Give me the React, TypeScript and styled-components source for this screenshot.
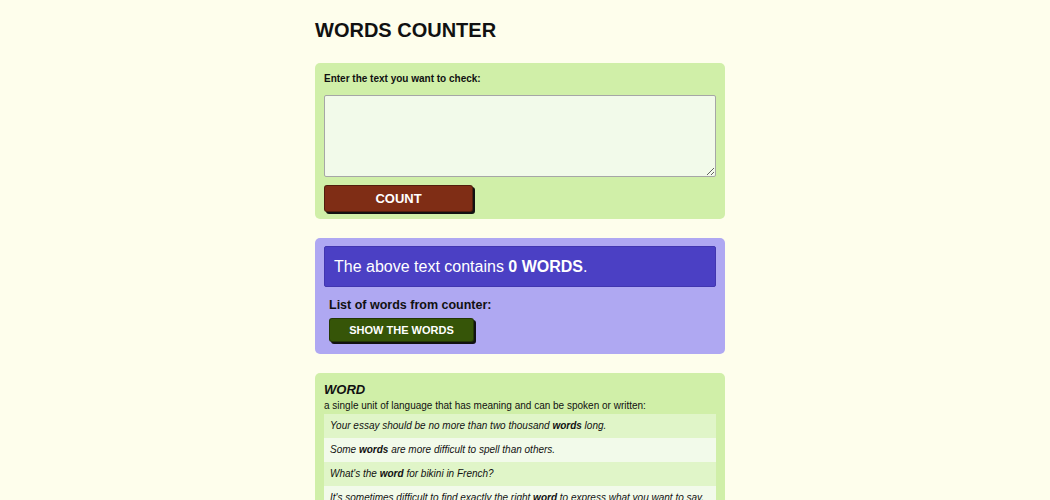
import React from "react";
import styled, { createGlobalStyle } from "styled-components";

const Global = createGlobalStyle`
  html, body { margin: 0; padding: 0; background: #fefeec; }
  body { font-family: "Liberation Sans", Arial, sans-serif; color: #111; }
`;

const Page = styled.div`
  width: 410px;
  margin: 0 0 0 315px;
  padding-top: 19px;
  display: flex;
  flex-direction: column;
`;

const Title = styled.h1`
  margin: 0 0 21px;
  font-size: 20px;
  line-height: 23px;
  font-weight: bold;
  color: #111;
`;

const Box = styled.section<{ $bg: string; $mb?: number }>`
  background: ${(p) => p.$bg};
  border-radius: 5px;
  padding: 8px 9px 7px;
  margin-bottom: ${(p) => p.$mb ?? 19}px;
  display: flex;
  flex-direction: column;
`;

const Label = styled.label`
  font-size: 10px;
  font-weight: bold;
  line-height: 14px;
  margin: 1px 0 9px;
`;

const TextArea = styled.textarea`
  box-sizing: border-box;
  width: 392px;
  height: 82px;
  background: #f2faea;
  border: 1px solid #a6a6a6;
  border-radius: 2px;
  resize: vertical;
  margin: 0 0 8px;
  font-family: inherit;
`;

const Btn = styled.button<{ $bg: string; $w: number; $h: number; $fs: number }>`
  width: ${(p) => p.$w}px;
  height: ${(p) => p.$h}px;
  background: ${(p) => p.$bg};
  color: #fff;
  font-family: "Liberation Sans", Arial, sans-serif;
  font-weight: bold;
  font-size: ${(p) => p.$fs}px;
  border: 1px solid rgba(0, 0, 0, 0.35);
  border-radius: 3px;
  box-shadow: 2px 2px 0 #111;
  padding: 0;
  cursor: pointer;
`;

const ResultBar = styled.div`
  background: #4b40c4;
  border: 1px solid #4136b0;
  border-radius: 2px;
  height: 41px;
  box-sizing: border-box;
  display: flex;
  align-items: center;
  padding-left: 9px;
  color: #fff;
  font-size: 16px;
`;

const SubHead = styled.div`
  font-size: 12.5px;
  font-weight: bold;
  margin: 11px 0 6px 5px;
`;

const BtnWrap = styled.div`
  padding-left: 5px;
  margin-bottom: 5px;
`;

const DefTitle = styled.div`
  font-size: 13px;
  font-weight: bold;
  font-style: italic;
  line-height: 17px;
`;

const DefText = styled.div`
  font-size: 10px;
  line-height: 16px;
`;

const Example = styled.div<{ $alt: boolean }>`
  background: ${(p) => (p.$alt ? "#f2faea" : "#e0f5c8")};
  font-size: 10px;
  font-style: italic;
  line-height: 24px;
  height: 24px;
  padding-left: 6px;
  width: 392px;
  box-sizing: border-box;
  white-space: nowrap;
  overflow: hidden;
`;

const examples: React.ReactNode[] = [
  <>Your essay should be no more than two thousand <b>words</b> long.</>,
  <>Some <b>words</b> are more difficult to spell than others.</>,
  <>What's the <b>word</b> for bikini in French?</>,
  <>It's sometimes difficult to find exactly the right <b>word</b> to express what you want to say.</>,
];

export default function App() {
  return (
    <>
      <Global />
      <Page>
        <Title>WORDS COUNTER</Title>
        <Box $bg="#d0efa8">
          <Label>Enter the text you want to check:</Label>
          <TextArea />
          <Btn $bg="#7f2d15" $w={149} $h={27} $fs={13}>COUNT</Btn>
        </Box>
        <Box $bg="#afa8f2">
          <ResultBar>
            <span>
              The above text contains <b>0 WORDS</b>.
            </span>
          </ResultBar>
          <SubHead>List of words from counter:</SubHead>
          <BtnWrap>
            <Btn $bg="#365508" $w={145} $h={24} $fs={11}>SHOW THE WORDS</Btn>
          </BtnWrap>
        </Box>
        <Box $bg="#d0efa8" $mb={10}>
          <DefTitle>WORD</DefTitle>
          <DefText>a single unit of language that has meaning and can be spoken or written:</DefText>
          {examples.map((e, i) => (
            <Example key={i} $alt={i % 2 === 1}>{e}</Example>
          ))}
        </Box>
      </Page>
    </>
  );
}
